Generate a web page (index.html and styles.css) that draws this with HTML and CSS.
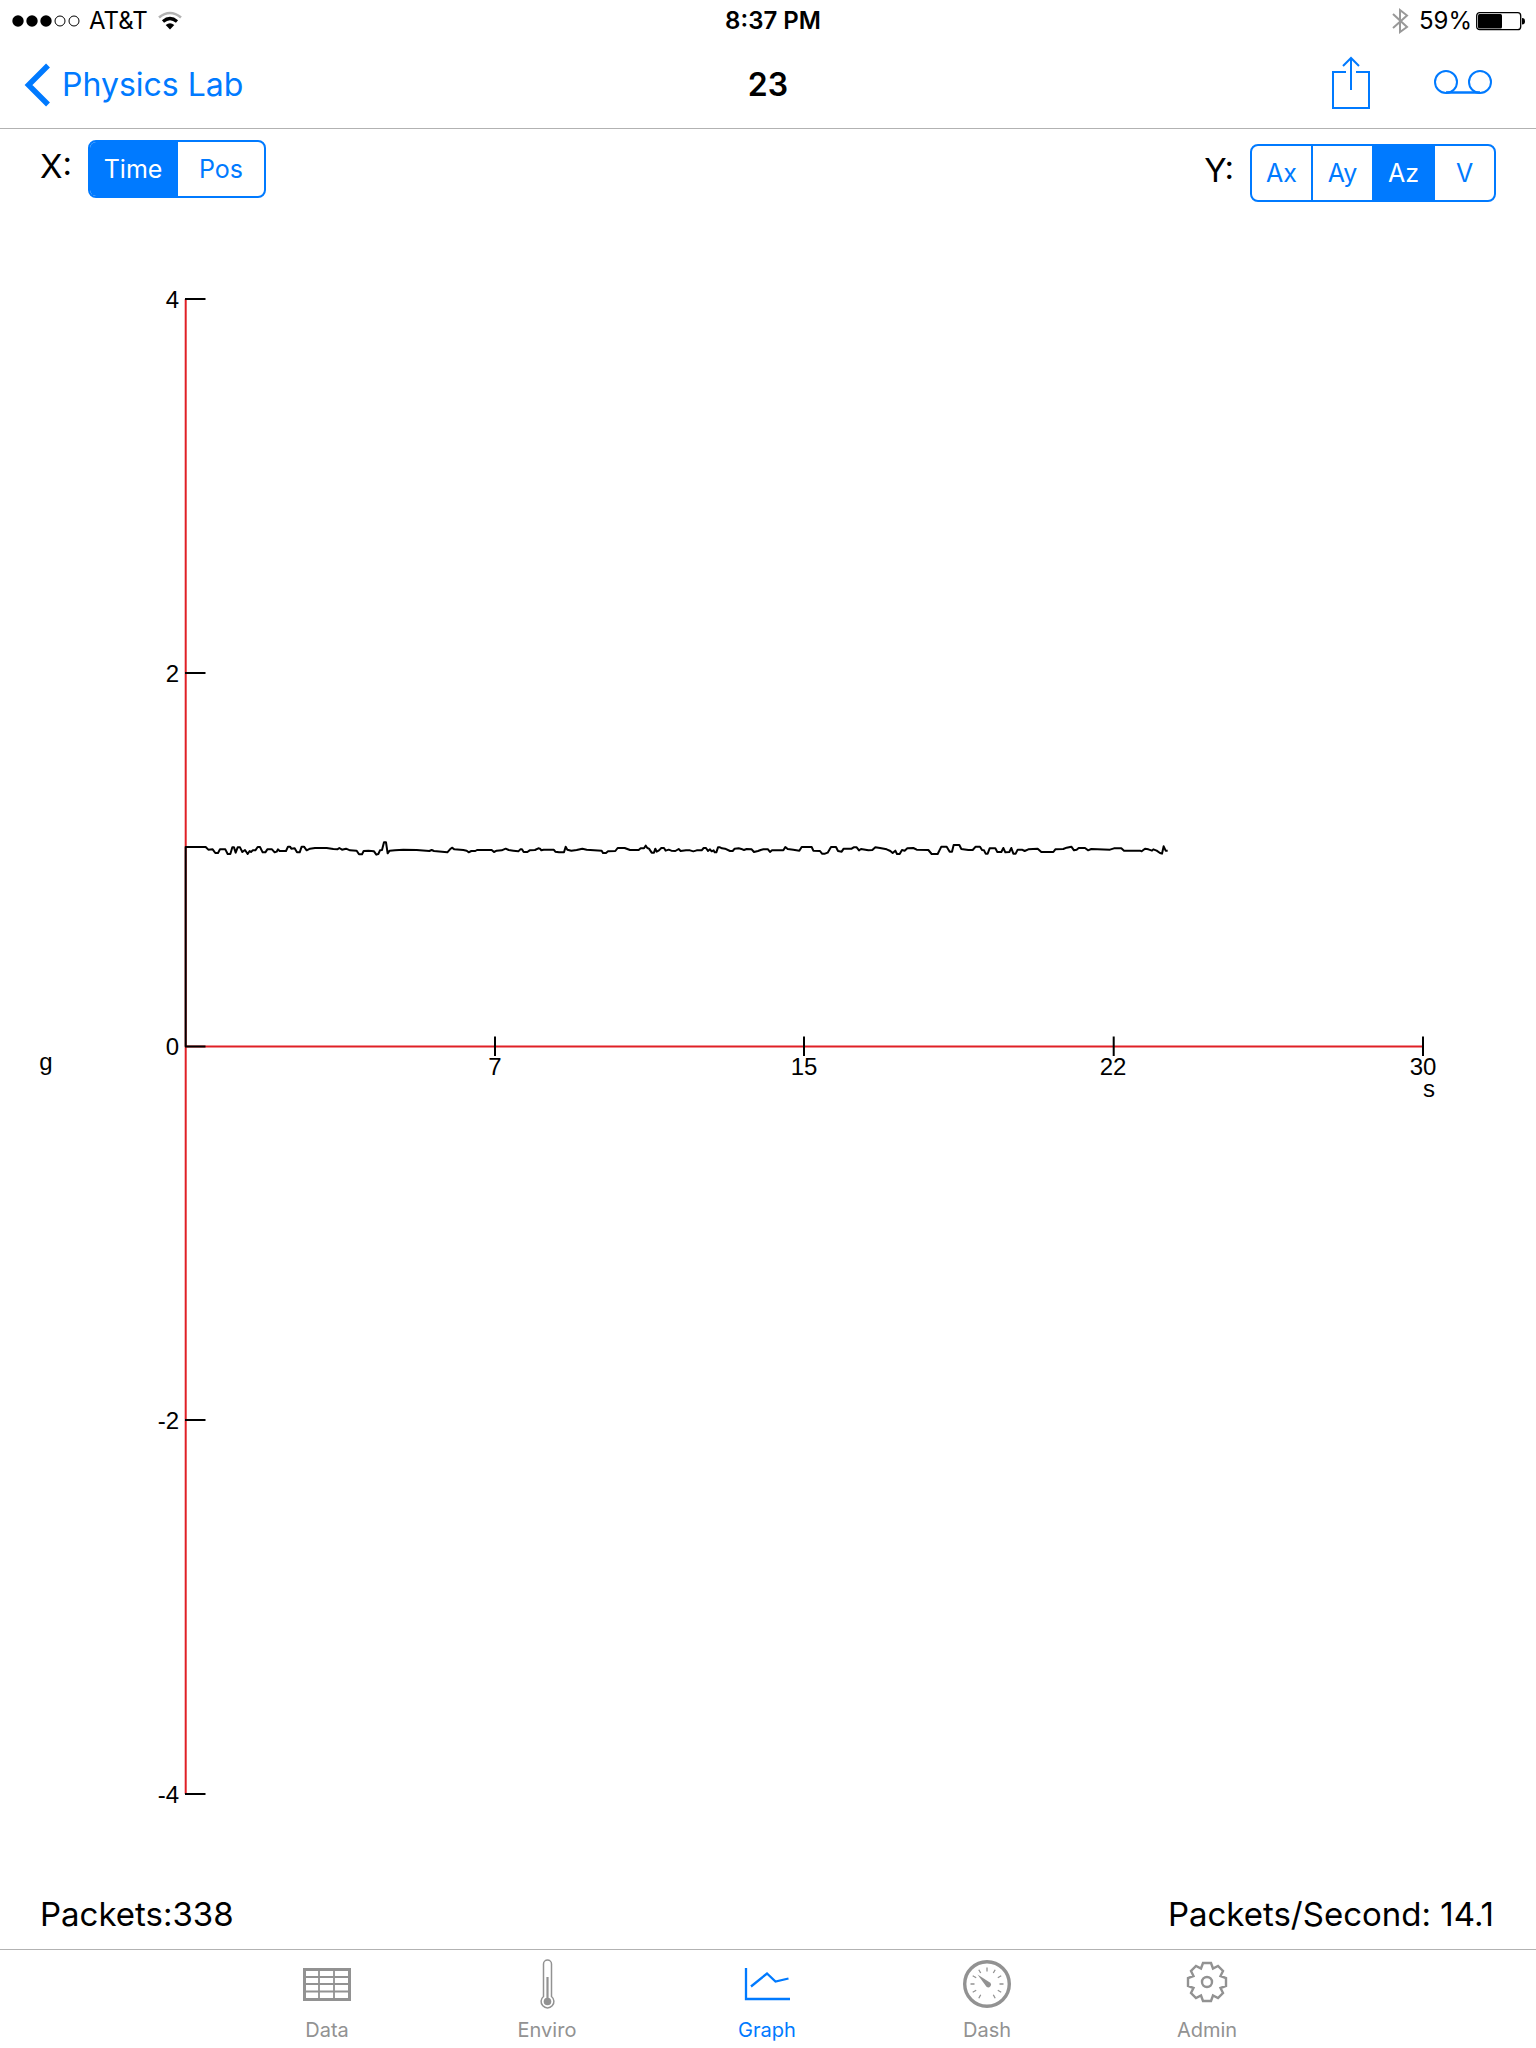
FILE: index.html
```html
<!DOCTYPE html>
<html lang="en">
<head>
<meta charset="utf-8">
<meta name="viewport" content="width=device-width, initial-scale=1">
<title>Physics Lab</title>
<link rel="stylesheet" href="styles.css">
</head>
<body>
<div class="app">
  <div class="status-bar">
    <div class="status-left">
      <svg class="signal" width="70" height="14" viewBox="0 0 70 14" aria-hidden="true">
        <circle cx="6" cy="7" r="5.7"/><circle cx="20" cy="7" r="5.7"/><circle cx="34" cy="7" r="5.7"/>
        <circle class="empty" cx="48" cy="7" r="5"/><circle class="empty" cx="62" cy="7" r="5"/>
      </svg>
      <span class="carrier">AT&amp;T</span>
      <svg width="26" height="20" viewBox="0 0 26 20" fill="none" stroke-width="3.2" aria-hidden="true">
        <path d="M2 6.5Q13-2.5 24 6.5" stroke="#b2b2b2" stroke-width="2.6"/>
        <path d="M6 10.5Q13 4.500 20 10.500" stroke="#000"/>
        <path d="M8.700 14Q13 10.500 17.300 14L13 18.500Z" fill="#000"/>
      </svg>
    </div>
    <time class="clock">8:37 PM</time>
    <div class="status-right">
      <svg width="18" height="28" viewBox="0 0 18 28" fill="none" stroke="#999" stroke-width="2" aria-hidden="true">
        <path d="M2 7L16 20L9 25V3L16 8.500L2 21"/>
      </svg>
      <span class="percent">59%</span>
      <svg width="50" height="20" viewBox="0 0 50 20" aria-hidden="true">
        <rect x="0.700" y="1.700" width="44" height="17" rx="3" fill="none" stroke="#000" stroke-width="1.300"/>
        <rect x="2" y="3" width="24" height="14.500" rx="1.500"/>
        <path d="M46 7q3 0 3 3.300t-3 3.300z"/>
      </svg>
    </div>
  </div>

  <header class="nav-bar">
    <a class="back" href="#">
      <svg width="26" height="44" viewBox="0 0 26 44" fill="none" stroke="currentColor" stroke-width="5.500" aria-hidden="true"><path d="M24 2.500L4.500 22L24 41.500"/></svg>
      <span>Physics Lab</span>
    </a>
    <h1 class="title">23</h1>
    <div class="actions">
      <button class="icon-button" type="button" aria-label="Share">
        <svg width="38" height="54" viewBox="0 0 38 54" fill="none" stroke="currentColor" stroke-width="2">
          <path d="M14 16H1V52H37V16H24M19 34V2M11 10L19 2L27 10"/>
        </svg>
      </button>
      <button class="icon-button" type="button" aria-label="Record">
        <svg width="58" height="54" viewBox="0 0 58 54" fill="none" stroke="currentColor" stroke-width="2">
          <circle cx="12" cy="26" r="11"/><circle cx="46" cy="26" r="11"/><path d="M12 36.500H46" stroke-width="2.500"/>
        </svg>
      </button>
    </div>
  </header>

  <main class="content">
    <div class="controls">
      <div class="axis-picker axis-x" role="radiogroup" aria-label="X axis">
        <span class="axis-name" aria-hidden="true">X:</span>
        <span class="segments">
          <label class="segment"><input type="radio" name="x-axis" checked><span>Time</span></label>
          <label class="segment"><input type="radio" name="x-axis"><span>Pos</span></label>
        </span>
      </div>
      <div class="axis-picker axis-y" role="radiogroup" aria-label="Y axis">
        <span class="axis-name" aria-hidden="true">Y:</span>
        <span class="segments">
          <label class="segment"><input type="radio" name="y-axis"><span>Ax</span></label>
          <label class="segment"><input type="radio" name="y-axis"><span>Ay</span></label>
          <label class="segment"><input type="radio" name="y-axis" checked><span>Az</span></label>
          <label class="segment"><input type="radio" name="y-axis"><span>V</span></label>
        </span>
      </div>
    </div>

    <svg class="chart" viewBox="0 202 1536 1675" role="img" aria-label="Acceleration Az in g over time in seconds">
      <path class="axis" d="M185.700 299V1794M185.700 1046.500H1423"/>
      <path class="tick" d="M185 299H205.500M185 673H205.500M185 1046.500H205.500M185 1420H205.500M185 1794H205.500M495 1036.500V1056M804 1036.500V1056M1113.700 1036.500V1056M1423 1036.500V1056"/>
      <g class="y-label">
        <text x="179" y="308">4</text>
        <text x="179" y="682">2</text>
        <text x="179" y="1055">0</text>
        <text x="179" y="1429">-2</text>
        <text x="179" y="1803">-4</text>
      </g>
      <g class="x-label">
        <text x="495" y="1075">7</text>
        <text x="804" y="1075">15</text>
        <text x="1113" y="1075">22</text>
        <text x="1423" y="1075">30</text>
        <text x="1429" y="1097">s</text>
        <text x="46" y="1070">g</text>
      </g>
      <!-- samples are in thirds of a chart unit -->
      <polyline class="trace" transform="translate(150 820) scale(0.333333)" points="107,680 107,81 167,81 175,89 188,88 196,99 204,99 210,88 226,88 233,102 241,102 247,82 252,82 257,98 263,82 270,82 277,96 285,90 293,102 299,93 303,96 308,91 316,91 323,81 330,81 338,97 346,97 352,88 366,88 374,97 380,95 384,88 389,93 408,93 414,80 420,80 424,86 434,85 441,97 449,97 455,80 462,80 470,91 480,86 495,84 530,84 550,87 562,88 568,84 576,89 588,86 600,91 620,92 627,103 636,103 641,93 655,92 672,94 679,104 685,102 690,91 696,90 702,67 708,67 713,100 719,92 735,91 760,89 800,90 838,93 845,90 852,93 892,97 900,88 906,83 913,88 940,90 950,92 956,97 964,93 976,93 981,90 1025,90 1032,96 1040,92 1055,91 1067,86 1076,90 1090,92 1105,94 1111,88 1116,88 1121,96 1132,96 1139,91 1155,90 1165,85 1170,86 1174,91 1181,89 1211,89 1216,95 1227,97 1242,97 1247,80 1252,89 1264,92 1280,90 1297,86 1310,89 1355,92 1359,99 1368,99 1374,94 1396,93 1403,84 1424,84 1440,90 1466,90 1472,85 1482,85 1487,77 1492,84 1497,86 1505,98 1512,98 1516,86 1520,95 1527,91 1534,84 1542,84 1547,92 1556,89 1564,92 1576,93 1586,87 1592,93 1608,91 1620,91 1630,94 1640,91 1655,91 1661,84 1668,84 1674,93 1680,88 1685,94 1691,91 1694,97 1699,97 1704,82 1710,82 1716,85 1725,86 1740,93 1748,93 1754,86 1766,85 1777,88 1782,90 1790,87 1805,88 1812,96 1824,93 1832,90 1840,88 1854,88 1860,96 1866,91 1900,91 1906,81 1913,87 1930,89 1948,92 1955,81 1985,81 1990,92 2010,93 2016,101 2025,101 2033,98 2043,81 2058,81 2064,93 2075,95 2081,86 2105,86 2111,82 2120,82 2127,91 2133,87 2155,91 2167,90 2176,82 2190,84 2210,88 2221,93 2228,99 2236,92 2241,102 2249,102 2256,90 2264,92 2272,85 2290,84 2300,89 2335,90 2345,102 2363,102 2374,80 2390,80 2399,95 2406,95 2411,75 2428,75 2434,87 2455,90 2468,90 2477,80 2490,80 2496,90 2502,91 2507,101 2513,101 2519,85 2536,85 2542,96 2554,96 2560,84 2566,97 2578,96 2584,84 2590,101 2597,101 2603,89 2616,89 2624,93 2635,88 2663,86 2674,96 2710,96 2716,88 2740,87 2750,83 2764,80 2772,91 2780,89 2786,84 2805,84 2814,91 2824,87 2880,89 2892,85 2914,85 2922,92 2970,92 2975,94 2985,86 2995,88 3006,92 3010,88 3020,92 3030,99 3036,101 3041,79 3047,92 3053,92"/>
    </svg>

    <div class="summary">
      <span>Packets:338</span>
      <span>Packets/Second: 14.1</span>
    </div>
  </main>

  <nav class="tab-bar" aria-label="Sections">
    <a class="tab" href="#">
      <svg width="52" height="52" viewBox="0 0 52 52" fill="none" stroke="currentColor" aria-hidden="true">
        <rect x="3.500" y="11.500" width="45" height="30" stroke-width="3"/><path d="M3 19H49M3 26H49M3 33.500H49M18 11V42M33 11V42" stroke-width="1.800"/>
      </svg>
      <span>Data</span>
    </a>
    <a class="tab" href="#">
      <svg width="52" height="52" viewBox="0 0 52 52" fill="none" stroke="currentColor" stroke-width="1.500" aria-hidden="true">
        <path d="M22.500 38.500V6a4 4 0 0 1 8 0V38.500a6.400 6.400 0 1 1-8 0Z"/><circle cx="26.500" cy="43.500" r="3.800" fill="currentColor" stroke="none"/><path d="M26.500 43V19" stroke-width="2.200"/>
      </svg>
      <span>Enviro</span>
    </a>
    <a class="tab active" href="#" aria-current="page">
      <svg width="52" height="52" viewBox="0 0 52 52" fill="none" stroke="currentColor" stroke-width="2.300" aria-hidden="true">
        <path d="M5 10V41H49M10 28.500L26 15.500L34.500 23.500L47.500 20.500"/>
      </svg>
      <span>Graph</span>
    </a>
    <a class="tab" href="#">
      <svg width="52" height="52" viewBox="0 0 52 52" fill="none" stroke="currentColor" aria-hidden="true">
        <circle cx="26" cy="26" r="22.300" stroke-width="3.400"/>
        <path d="M26 9.500V13.500M34.200 11.700L32.300 15M40.200 17.700L36.800 19.700M42.500 26H38.500M40.200 34.200L36.800 32.300M34.200 40.200L32.300 36.800M17.800 40.200L19.700 36.800M11.700 34.200L15.200 32.300M9.500 26H13.500M11.700 17.700L15.200 19.700M17.800 11.700L19.700 15" stroke-width="1.300"/>
        <path d="M16.500 16.500L28.900 24.500A2.700 2.700 0 0 1 25.500 28.800Z" fill="currentColor" stroke="none"/>
      </svg>
      <span>Dash</span>
    </a>
    <a class="tab" href="#">
      <svg width="52" height="52" viewBox="0 0 52 52" fill="none" stroke="currentColor" stroke-width="2.400" aria-hidden="true">
        <path d="M22 5H30L32 10.500L37 8L42 13L39.500 18L45 20V28L39.500 30L42 35L37 40L32 37.500L30 43H22L20 37.500L15 40L10 35L12.500 30L7 28V20L12.500 18L10 13L15 8L20 10.500Z"/><circle cx="26" cy="24" r="5"/>
      </svg>
      <span>Admin</span>
    </a>
  </nav>
</div>
</body>
</html>
```
FILE: styles.css
```css
* {
  box-sizing: border-box;
}

body {
  margin: 0;
  background: #fff;
  color: #000;
  font-family: Inter, "Liberation Sans", sans-serif;
}

svg {
  display: block;
}

.app {
  display: flex;
  flex-direction: column;
  min-height: 100vh;
}

.status-bar,
.nav-bar {
  display: grid;
  grid-template-columns: 1fr auto 1fr;
  align-items: center;
}

.status-bar {
  height: 41px;
  padding: 0 10px 0 12px;
  font-size: 24px;
}

.status-left,
.status-right {
  display: flex;
  align-items: center;
}

.status-left {
  gap: 7px;
}

.status-right {
  justify-content: flex-end;
  gap: 4px;
}

.percent {
  padding-left: 6px;
}

.signal .empty {
  fill: none;
  stroke: #000;
}

.carrier {
  margin-right: 2px;
}

.clock {
  padding-left: 8px;
  font-weight: 600;
}

.nav-bar {
  height: 88px;
  border-bottom: 1px solid #b2b2b2;
}

.back {
  display: flex;
  align-items: center;
  gap: 12px;
  padding-left: 24px;
  color: #007aff;
  font-size: 32px;
  text-decoration: none;
}

.title {
  margin: 0;
  font-size: 32px;
  font-weight: 600;
}

.actions {
  display: flex;
  justify-content: flex-end;
  gap: 64px;
  padding-right: 44px;
}

.icon-button {
  padding: 0 0 4px;
  border: 0;
  background: none;
  color: #007aff;
}

.content {
  display: flex;
  flex: 1;
  flex-direction: column;
}

.controls {
  display: flex;
  justify-content: space-between;
  align-items: flex-end;
  height: 73px;
  padding: 0 40px;
}

.axis-picker {
  display: flex;
  align-items: flex-start;
}

.axis-x {
  padding-bottom: 4px;
}

.axis-name {
  padding-right: 16px;
  font-size: 33px;
  line-height: 52px;
}

.segments {
  display: flex;
  height: 58px;
  border: 2px solid #007aff;
  border-radius: 8px;
  overflow: hidden;
}

.axis-x .segments {
  width: 178px;
}

.axis-y .segments {
  width: 246px;
}

.segment {
  position: relative;
  display: flex;
  flex: 1;
  color: #007aff;
  font-size: 25px;
}

.segment + .segment {
  border-left: 2px solid #007aff;
}

.segment input {
  position: absolute;
  opacity: 0;
}

.segment span {
  display: flex;
  flex: 1;
  align-items: center;
  justify-content: center;
}

.segment input:checked + span {
  background: #007aff;
  color: #fff;
}

.chart {
  flex: 1;
  width: 100%;
  min-height: 0;
}

.axis,
.tick,
.trace {
  fill: none;
  stroke-width: 2;
}

.axis {
  stroke: #e02026;
}

.tick {
  stroke: #000;
}

.trace {
  stroke: #000;
  stroke-width: 6;
  stroke-linejoin: round;
}

.chart text {
  font-family: "Liberation Sans", sans-serif;
  font-size: 24px;
}

.y-label {
  text-anchor: end;
}

.x-label {
  text-anchor: middle;
}

.summary {
  display: flex;
  justify-content: space-between;
  padding: 2px 42px 0 40px;
  font-size: 33px;
  line-height: 70px;
}

.tab-bar {
  display: flex;
  justify-content: center;
  height: 99px;
  padding: 8px 2px 0 0;
  border-top: 1px solid #b2b2b2;
}

.tab {
  display: flex;
  flex: 0 1 220px;
  flex-direction: column;
  align-items: center;
  gap: 8px;
  color: #929292;
  font-size: 20px;
  line-height: 24px;
  text-decoration: none;
}

.tab.active {
  color: #007aff;
}
```
